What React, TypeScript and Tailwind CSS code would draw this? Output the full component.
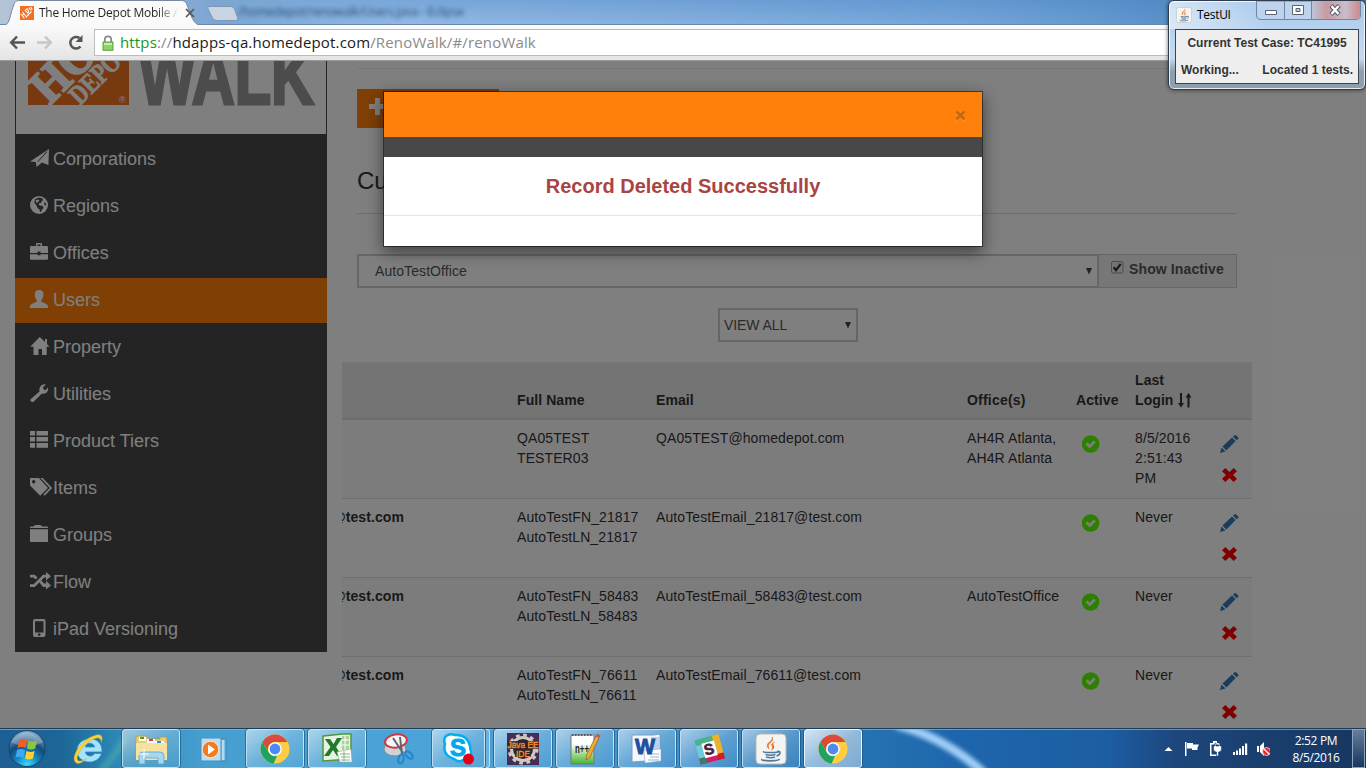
import React from "react";

type IconProps = { className?: string };

const sideIcons: Record<string, React.ReactNode> = {
  send: (
    <>
      <path d="M0 12.4 19 0l-.6 16-6.6-2.6L6.6 18l-.8-5z" />
      <path d="M17 2.500 7.800 12.800" stroke="#484848" strokeWidth="1" fill="none" />
    </>
  ),
  globe: (
    <>
      <circle cx="9" cy="9" r="9" />
      <path
        d="M5 3.2 9 1.6l3.5.9.5 1.7-1.6 1.3-.4 1.6-1.8.2-.7 1.4 1.6.9 2.7.4.8 1.9-1.6 1.5-.6 2-1.2.5-.8-2.4-1.8-1.6L6.200 9 4.300 6.600z"
        fill="#484848"
      />
      <path d="M5.500 4.500 8 3.500l1.500 1-1.800 2-1.500.3zM11 3l1 1" fill="#fff" />
      <path d="M14.500 5.500l1.600 2.600-.4 1.700-1.500-1z" fill="#484848" />
    </>
  ),
  briefcase: (
    <path d="M6 3V1.200Q6 0 7 0h4q1 0 1 1.200V3h4.800Q18 3 18 4.200V10h-7.500V8.500h-3V10H0V4.200Q0 3 1.200 3zm1.400 0h3.200V1.400H7.400zM0 11.300h7.500v1h3v-1H18v4.200q0 1.200-1 1.200H1q-1 0-1-1.200z" />
  ),
  user: (
    <path d="M4.800 4Q4.800 0 9 0t4.500 4q0 4.500-2.300 6.300v1.200l5 2.500q1.800.8 1.800 2.300V18H0v-1.700Q0 14.800 1.800 14l5-2.500v-1.200Q4.800 8.500 4.800 4z" />
  ),
  home: <path d="M9.800 0 15 5V2h2v5l2.400 2.700h-2.700V18h-4.700v-6H8.500v6h-5V9.700H.2z" />,
  wrench: (
    <path d="M.6 15.200 9.500 7.600Q8.700 3.500 11.500 1.300 13.500-.2 16 .4L13 3.300l.5 2.200 2.400.4L18 3.200q1 3-1.300 5.200-2.200 1.900-5 1.300L3.600 17.700q-1.500.8-2.600-.3t-.4-2.200z" />
  ),
  list: (
    <path d="M.5 0H5v4.600H0V.5zM6.500 0H18v4.600H6.500zM0 6h5v4.600H0zM6.500 6H18v4.600H6.500zM0 12h5v4.800H.5L0 16zM6.500 12H18v4.800H6.500z" />
  ),
  tags: (
    <>
      <path
        fillRule="evenodd"
        d="M0 .8Q0 0 .8 0H9l9 10-7.800 7.800L0 7.500zM3.600 2a1.700 1.700 0 1 0 .1 0z"
      />
      <path d="M10.500 0h2.300l9.400 10-7.600 7.800-1.300-1.300L19.800 10z" />
    </>
  ),
  folder: (
    <path d="M0 3V2.200Q0 1.500.8 1.500H3.500Q4.500 0 5.500 0h4.700q1 0 1.800 1.500h5.200q.8 0 .8.8V3zM0 4.300h18v12q0 .7-.8.700H.8Q0 17 0 16.300z" />
  ),
  random: (
    <path d="M0 2.800h4.800l2.700 2.700-1.900 2-2-2H0zm0 9.400h3.600l9.500-9.400H16V0l5 4.200-5 4.200V5.500h-1.800L4.800 15H0zm9.400-1.800 1.900-1.900 2.900 2.900H16V8.800l5 4.600-5 4.200V15h-3z" />
  ),
  phone: (
    <path
      fillRule="evenodd"
      d="M5 0h8.500q2 0 2 2v14q0 2-2 2H5q-2 0-2-2V2q0-2 2-2zm0 2.300v11.200h8.500V2.300zm4.200 12a1.300 1.300 0 1 0 .1 0z"
    />
  ),
};

const navItems = [
  { label: "Corporations", icon: "send" },
  { label: "Regions", icon: "globe" },
  { label: "Offices", icon: "briefcase" },
  { label: "Users", icon: "user", active: true },
  { label: "Property", icon: "home" },
  { label: "Utilities", icon: "wrench" },
  { label: "Product Tiers", icon: "list" },
  { label: "Items", icon: "tags" },
  { label: "Groups", icon: "folder" },
  { label: "Flow", icon: "random" },
  { label: "iPad Versioning", icon: "phone" },
];

const rows = [
  { user: "", name: ["QA05TEST", "TESTER03"], email: "QA05TEST@homedepot.com", offices: ["AH4R Atlanta,", "AH4R Atlanta"], login: ["8/5/2016", "2:51:43", "PM"] },
  { user: "@test.com", name: ["AutoTestFN_21817", "AutoTestLN_21817"], email: "AutoTestEmail_21817@test.com", offices: [], login: ["Never"] },
  { user: "@test.com", name: ["AutoTestFN_58483", "AutoTestLN_58483"], email: "AutoTestEmail_58483@test.com", offices: ["AutoTestOffice"], login: ["Never"] },
  { user: "@test.com", name: ["AutoTestFN_76611", "AutoTestLN_76611"], email: "AutoTestEmail_76611@test.com", offices: [], login: ["Never"] },
];

function DepotMark({ className }: IconProps) {
  return (
    <svg viewBox="0 0 16 16" className={className}>
      <path d="M0 0h16v16H0z" fill="#f27021" />
      <path d="m1 9 4 5M3 7l4 5M2 11l3-2M6 5l3 3 1-2-2-3zM10 2l3 3M12 1l2 3M7 13l2-3M9 11l2-3M11 9l2-3" stroke="#fff" strokeWidth="1.200" fill="none" />
    </svg>
  );
}

function BrowserChrome() {
  return (
    <header className="flex flex-none flex-col">
      <div className="relative flex h-[25px] items-end overflow-hidden bg-linear-to-b from-[#6d9fd3] to-[#a1c4e9]">
        <svg className="absolute inset-0" width="1366" height="25">
          <defs>
            <linearGradient id="glass" x1="0" x2="1">
              <stop offset="0" stopColor="#b5c3d5" />
              <stop offset=".16" stopColor="#7ba5d1" />
              <stop offset=".3" stopColor="#84aede" stopOpacity=".5" />
              <stop offset=".7" stopColor="#5b93cf" stopOpacity=".6" />
              <stop offset="1" stopColor="#3f78b6" />
            </linearGradient>
            <filter id="soft"><feGaussianBlur stdDeviation="2.200" /></filter>
          </defs>
          <rect width="1366" height="25" fill="url(#glass)" />
          <text x="238" y="16" fontSize="12" textLength="226" fontFamily="Open Sans, sans-serif" fill="#1d3f68" opacity=".85" filter="url(#soft)">
            /homedepot/renowalk/Users.java - Eclipse
          </text>
          <path d="M0 24.500h1366" stroke="#6889ad" />
          <path d="M3 25.500C10 25 9 18 13 7 15 1 16 .5 20 .5h160c5 0 6 1 8 7 4 12 7 18 14 18z" fill="#fafafa" stroke="#7789a0" />
          <path d="M209 6.500h22q2.500 0 3.500 2.500l3 8.500q1 3-2 3h-19q-3 0-4-2.500l-4.500-9q-1-2.500 1-2.500z" fill="#c8d4e3" stroke="#8195b0" />
        </svg>
        <div className="relative flex h-full items-center pl-[20px]">
          <DepotMark className="h-[14px] w-[14px]" />
          <span className="ml-[5px] w-[139px] overflow-hidden whitespace-nowrap bg-linear-to-r from-[#222] from-85% to-transparent bg-clip-text font-['Open_Sans',sans-serif] text-[12px] tracking-[-0.25px] text-transparent">
            The Home Depot Mobile App
          </span>
          <svg className="ml-[6px]" width="12" height="12"><path d="m2 2 8 8M10 2l-8 8" stroke="#555" strokeWidth="1.700" /></svg>
        </div>
      </div>
      <div className="flex h-[36px] items-center border-b border-[#9a9a9a] bg-linear-to-b from-[#fafafa] to-[#e4e4e4] pl-[8px]">
        <svg width="82" height="24" fill="none" strokeWidth="2.500">
          <path d="M17 11.500H4M9 5.500 3.200 11.500 9 17.500" stroke="#555" />
          <path d="M29 11.500h13M37 5.500l5.800 6-5.800 6" stroke="#c6c6c6" />
          <path d="M72.500 15.500A5.800 5.800 0 1 1 71.500 7" stroke="#555" />
          <path d="M74.500 4v7h-7z" fill="#555" />
        </svg>
        <div className="ml-[4px] flex h-[27px] flex-1 items-center border border-r-0 border-[#bcbcbc] bg-white pl-[7px]">
          <svg width="12" height="16" viewBox="0 0 12 16">
            <path d="M2.800 8V4.500a3.200 3.200 0 0 1 6.400 0V8" fill="none" stroke="#8b8b8b" strokeWidth="1.800" />
            <path d="M1 7h10v8.300H1z" fill="#8ed36a" stroke="#55a337" />
            <path d="M2 8h8v2H2z" fill="#c8ecb2" />
          </svg>
          <span className="ml-[6px] font-['Open_Sans',sans-serif] text-[15px] tracking-[0.155px] whitespace-nowrap text-[#8a8a8a]">
            <span className="text-[#159915]">https</span>://<span className="text-[#1a1a1a]">hdapps-qa.homedepot.com</span>/RenoWalk/#/renoWalk
          </span>
        </div>
      </div>
    </header>
  );
}

function Logo() {
  return (
    <svg width="310" height="73" viewBox="16 61 310 73" className="block">
      <defs><clipPath id="square"><path d="M28 4h101v101H28z" /></clipPath></defs>
      <g clipPath="url(#square)">
        <path d="M28 4h101v101H28z" fill="#ef721f" />
        <g fill="#fff" stroke="#fff" strokeWidth="1.800" fontFamily="Liberation Serif, serif" fontWeight="700">
          <text transform="translate(49.500 106) rotate(-45) scale(.93 1)" fontSize="49">HOME</text>
          <text transform="translate(80 106) rotate(-45) scale(.78 1)" strokeWidth=".8" fontSize="28">DEPOT</text>
        </g>
        <text x="119" y="103" fontSize="9" fill="#fff" fontFamily="Liberation Sans, sans-serif">®</text>
      </g>
      <text x="139" y="103.500" fontSize="80" fontWeight="700" textLength="175" lengthAdjust="spacingAndGlyphs" fill="#98999b" stroke="#98999b" strokeWidth="3" fontFamily="Liberation Sans, sans-serif">WALK</text>
    </svg>
  );
}

function Sidebar() {
  return (
    <aside className="ml-[15px] h-[591px] w-[312px] flex-none bg-[#484848]">
      <div className="mx-px bg-white"><Logo /></div>
      <nav className="flex flex-col gap-[2px] pt-[3px]">
        {navItems.map((item) => (
          <a key={item.label} className={"flex h-[45px] items-center pl-[15px] text-[18px] text-white " + (item.active ? "bg-[#ff7f0a]" : "")}>
            <svg width="18" height="18" viewBox="0 0 18 18" fill="#fff" className="mr-[5px] -mt-[4px] flex-none overflow-visible">
              {sideIcons[item.icon]}
            </svg>
            <span className="-mt-[1px]">{item.label}</span>
          </a>
        ))}
      </nav>
    </aside>
  );
}

function Caret() {
  return <svg width="6" height="7"><path d="M0 0h6L3 6.500z" fill="#444" /></svg>;
}

function RowIcons() {
  return (
    <div className="flex w-[40px] flex-col items-start pt-[15px] pl-[8px]">
      <svg width="19" height="18" viewBox="0 0 19 18" fill="#337ab7">
        <path d="M0 18l1.500-5.500 4 4zM2.500 11.500 12 2.500l3.600 3.600-9.200 9.300zM13 1.700 14.500.3q1-.6 1.800.2l1.900 1.900q.6.900 0 1.500l-1.500 1.400z" />
      </svg>
      <svg className="mt-[15px] ml-[2px]" width="15" height="14" viewBox="0 0 15 14">
        <path d="M3.300 0 7.500 4 11.700 0 15 3.200 11 7l4 3.800-3.300 3.200-4.200-4-4.200 4L0 10.800 4 7 0 3.200z" fill="#ff0000" />
      </svg>
    </div>
  );
}

function UserTable() {
  return (
    <div className="mt-[20px] w-[910px] text-[14px] leading-[20px] text-[#333]">
      <div className="flex h-[58px] items-end border-b-2 border-[#dadada] bg-[#e8e8e8] pb-[8px] font-bold tracking-[0.08px]">
        <div className="w-[167px]" />
        <div className="w-[139px] pl-[8px]">Full Name</div>
        <div className="w-[311px] pl-[8px]">Email</div>
        <div className="w-[109px] pl-[8px] tracking-[0.2px]">Office(s)</div>
        <div className="w-[59px] pl-[8px]">Active</div>
        <div className="w-[125px] pl-[8px]">
          Last<br />
          <span className="flex items-center">
            Login
            <svg className="ml-[4px]" width="14" height="15" viewBox="0 0 14 15" fill="#333">
              <path d="M2 0h2v10h2l-3 4.500L0 10h2zM9.500 14.500V4.500h-2L10.500 0l3 4.500h-2v10z" />
            </svg>
          </span>
        </div>
      </div>
      {rows.map((row, i) => (
        <div
          key={i}
          className={"flex tracking-[0.1px] " + (i === 0 ? "h-[78px] " : "h-[79px] border-t border-[#ddd] ") + (i % 2 === 0 ? "bg-[#f9f9f9]" : "bg-white")}
        >
          <div className="flex w-[62px] flex-none justify-end overflow-hidden pt-[8px] font-bold">{row.user}</div>
          <div className="ml-[105px] w-[139px] pt-[8px] pl-[8px]">{row.name.map((t) => <div key={t}>{t}</div>)}</div>
          <div className="w-[311px] pt-[8px] pl-[8px]">{row.email}</div>
          <div className="w-[109px] pt-[8px] pl-[8px]">{row.offices.map((t) => <div key={t}>{t}</div>)}</div>
          <div className="w-[59px] pt-[15px] pl-[14px]">
            <svg width="18" height="18" viewBox="0 0 18 18">
              <circle cx="8.600" cy="9" r="8.800" fill="#5bff00" />
              <path d="m3.500 9.300 2.100-2.100 2.200 2.200 3.900-4 2.100 2.100L7.800 13.500z" fill="#f9f9f9" />
            </svg>
          </div>
          <div className="w-[85px] pt-[8px] pl-[8px]">{row.login.map((t) => <div key={t}>{t}</div>)}</div>
          <RowIcons />
        </div>
      ))}
    </div>
  );
}

function MainPanel() {
  return (
    <main className="ml-[15px] w-[910px] flex-none">
      <div className="px-[15px] pt-[7px]">
        <hr className="border-[#eee]" />
        <button className="mt-[20px] flex h-[39px] w-[142px] items-center bg-[#ff7f0a] pl-[12px] text-white">
          <svg width="17" height="17" className="-mt-[4px]"><path d="M6 0h5v6h6v5h-6v6H6v-6H0V6h6z" fill="#fff" /></svg>
        </button>
        <h3 className="mt-[40px] text-[24px] leading-[26px] text-[#333]">Current Users</h3>
        <hr className="mt-[19px] border-[#ddd]" />
        <div className="mt-[40px] flex h-[34px] text-[14px] text-[#555]">
          <div className="flex flex-1 items-center justify-between border-2 border-[#ccc] bg-white pr-[5px] pl-[16px] tracking-[0.08px]">
            AutoTestOffice
            <Caret />
          </div>
          <div className="flex w-[138px] border border-l-0 border-[#ccc] bg-[#eee] pl-[12px]">
            <svg className="mt-[6px]" width="13" height="13">
              <rect x=".5" y=".5" width="11.500" height="11.500" rx="1.500" fill="#e9e9e9" stroke="#999" />
              <path d="m2.700 6.300 2.300 2.800 4.700-6.300" stroke="#333" strokeWidth="2.200" fill="none" />
            </svg>
            <span className="ml-[5px] pt-[4px] font-bold leading-[20px] tracking-[0.12px] whitespace-nowrap">Show Inactive</span>
          </div>
        </div>
        <div className="mx-auto mt-[20px] ml-[361px] flex h-[34px] w-[140px] items-center justify-between border-2 border-[#ccc] bg-white pr-[5px] pl-[4px] text-[14px] text-[#555]">
          <span className="tracking-[-0.08px]">VIEW ALL</span>
          <Caret />
        </div>
      </div>
      <UserTable />
    </main>
  );
}

function Dialog() {
  return (
    <div className="absolute inset-0 flex items-start justify-center bg-black/50 pt-[30px]">
      <div className="w-[600px] border border-black/50 bg-white bg-clip-padding shadow-[0_5px_15px_rgba(0,0,0,0.5)]">
        <div className="flex h-[45px] items-center justify-end bg-[#ff810c] pr-[16px]">
          <svg width="11" height="11" viewBox="0 0 11 11" className="mt-[2px]">
            <path d="m1.500 2.500 8 8m0-8-8 8" stroke="#ffb066" strokeWidth="1.500" />
            <path d="m1.500 1.500 8 8m0-8-8 8" stroke="#c4680f" strokeWidth="2.600" />
          </svg>
        </div>
        <div className="h-[20px] bg-[#484849]" />
        <div className="flex h-[58px] items-center justify-center text-[20px] font-bold text-[#a94442]">
          Record Deleted Successfully
        </div>
        <div className="h-[31px] border-t border-[#e5e5e5]" />
      </div>
    </div>
  );
}

function JavaCup({ className }: IconProps) {
  return (
    <svg viewBox="0 0 32 32" className={className}>
      <rect x="1" y="1" width="30" height="30" rx="4" fill="#f4f4f2" stroke="#b9b9b5" />
      <path d="M17 4q2 3-1.500 5.500T14 16q-4-3.500.5-7T17 4zM19.500 9q-4 2-2.500 4t-.5 4q4-2 2-4.500T19.500 9z" fill="#e76f1f" stroke="#e76f1f" strokeWidth=".6" />
      <path d="M9 18.500q-2 1 7 1t6-1M10.500 21.500q5 1.500 10 0M11 24q5 1.500 9 0M7 26q-1 1.800 8 1.800t9.500-1.800M22 18.500q4-.5 2.500 2.500-1 1.500-3 2" fill="none" stroke="#517a98" strokeWidth="1.700" />
    </svg>
  );
}

function TestWindow() {
  return (
    <section className="absolute top-0 right-0 flex h-[90px] w-[198px] flex-col overflow-hidden rounded-[6px] border border-[#2f3c4b] bg-linear-to-b from-[#a9c9ec] from-0% via-[#c5daf1] via-65% to-[#8f9eaf] to-80% shadow-[inset_0_0_0_1px_rgba(255,255,255,0.8),0_0_4px_rgba(0,0,0,0.6)]">
      <div className="flex h-[28px] items-start justify-between bg-linear-to-r from-white/50 via-transparent to-transparent pl-[7px]">
        <div className="flex h-full items-center">
          <JavaCup className="h-[16px] w-[16px]" />
          <span className="ml-[5px] font-['Open_Sans',sans-serif] text-[12px] tracking-[-0.3px] text-black">TestUI</span>
        </div>
        <svg width="105" height="20" className="mr-[4px] flex-none">
          <defs>
            <linearGradient id="closeGlow" x1="0" x2="1">
              <stop offset="0" stopColor="#bcc5d8" /><stop offset=".3" stopColor="#c99a9f" /><stop offset=".7" stopColor="#c9bccb" /><stop offset="1" stopColor="#cf8a8d" />
            </linearGradient>
          </defs>
          <path d="M.5 0v14q0 4.500 4.500 4.500h95q4.500 0 4.500-4.500V0z" fill="#bdd3ee" stroke="#71869f" />
          <path d="M56 0v18h44q4 0 4-4V0z" fill="url(#closeGlow)" />
          <path d="M28.500 0v18M55.500 0v18" stroke="#71869f" />
          <path d="M9.500 9.500h11v4h-11z" fill="#fff" stroke="#5b6473" />
          <path d="M36.500 4.500h11v9h-11z" fill="#fff" stroke="#5b6473" />
          <path d="M40 7.500h4v3h-4z" fill="#b9cbe2" stroke="#5b6473" />
          <path d="m75 4.500 8 9m0-9-8 9" stroke="#566070" strokeWidth="4.500" />
          <path d="m75.500 5 7 8m0-8-7 8" stroke="#fff" strokeWidth="2.400" />
        </svg>
      </div>
      <div className="mx-[6px] flex h-[55px] flex-col justify-between border border-[#3a4452] bg-[#eee] pt-[5px] pb-[4px] text-[12px] leading-[17px] font-bold text-[#333]">
        <div className="text-center whitespace-nowrap">Current Test Case: TC41995</div>
        <div className="flex justify-between pr-[5px] pl-[5px] whitespace-nowrap"><span>Working...</span><span>Located 1 tests.</span></div>
      </div>
    </section>
  );
}

function ChromeIcon() {
  return (
    <>
      <circle cx="16" cy="16" r="14.500" fill="#ffcd42" />
      <path d="M3.500 8.700A14.500 14.500 0 0 1 28.600 9H16a7 7 0 0 0-6.300 10z" fill="#d94c3d" />
      <path d="M3.500 8.700 9.800 19.500A7 7 0 0 0 18 22.700L14.700 30.400A14.500 14.500 0 0 1 3.500 8.700z" fill="#1da362" />
      <circle cx="16" cy="16" r="6.800" fill="#fff" />
      <circle cx="16" cy="16" r="5.400" fill="#4c8bf5" />
    </>
  );
}

const tasks: { name: string; kind: "plain" | "open" | "active"; art: React.ReactNode }[] = [
  {
    name: "ie", kind: "plain",
    art: (
      <>
        <path d="M29 19H12.500c.3 4.500 7 5.500 9 1.500h7C25 33 4 31.500 4 17.500 4 2.500 30 .5 29 19zM12.500 14h9c-.7-5-8.500-5-9 0z" fill="#a5e3fb" stroke="#2a8bc9" strokeWidth=".8" />
        <path d="M4.500 30.500C-4 28 5 9.500 19 3.500c7-3 12-2.500 9.500 6-.5-5.500-4-5.500-9-3C8.500 12 .5 26.500 6 28q3.500.5 7.500-2.500-5.500 5.500-9 5z" fill="#fbd234" stroke="#d5a017" strokeWidth=".4" />
      </>
    ),
  },
  {
    name: "explorer", kind: "open",
    art: (
      <>
        <path d="M1 5q0-2 2-2h8l2 3h12V4h5q2 0 2 2v20H1z" fill="#e8cd7c" stroke="#b99645" strokeWidth=".7" />
        <path d="M4 4h7v4H4zM12 6h8v4h-8zM20 8h9v4h-9z" fill="#fff" />
        <path d="M5 4h4v2H5z" fill="#37a637" /><path d="M14 6h4v2h-4z" fill="#d64031" /><path d="M22 8h4v2h-4z" fill="#2e8cd0" />
        <path d="M1 10h31v17H1z" fill="#f6e2a0" />
        <path d="M4 31v-8q0-4 4-4h17q4 0 4 4v8h-6v-6H10v6z" fill="#a4d7f1" stroke="#5da2cb" strokeWidth=".8" />
        <path d="M9 16v10M4 21h10" stroke="#fff" />
      </>
    ),
  },
  {
    name: "player", kind: "plain",
    art: (
      <>
        <path d="M20 6h9v22h-9z" fill="#7fbfe4" stroke="#3a83b5" /><path d="M4 5h20v23H4z" fill="#b8dcf0" stroke="#4c91bd" />
        <path d="M26 7v20" stroke="#e8f6fd" />
        <circle cx="13.500" cy="16.500" r="8.300" fill="#f47c1c" stroke="#fff" strokeWidth=".7" /><path d="M11 11.500v10l7-5z" fill="#fff" />
      </>
    ),
  },
  { name: "chrome", kind: "open", art: <ChromeIcon /> },
  {
    name: "excel", kind: "open",
    art: (
      <>
        <path d="M2 3 22 1h8v25l-28 2z" fill="#e8f3df" stroke="#4f9838" strokeWidth="1.500" />
        <path d="M21 3h7v14h-7z" fill="#a8d39a" /><path d="M24 3v14M21 7h7M21 12h7" stroke="#fff" />
        <path d="M4 6h5l3.500 5L16 5h5l-6 9 6 9h-5l-4-6-4 6H3l6.500-9z" fill="#1f7a2f" />
        <path d="m16 19 14-3 1 13H19z" fill="#fff" stroke="#8fb586" strokeWidth=".6" /><path d="M19 21h10M20 24h9M20 27h9M23 18v10" stroke="#70a362" strokeWidth=".8" />
      </>
    ),
  },
  {
    name: "snip", kind: "plain",
    art: (
      <>
        <ellipse cx="12" cy="16" rx="11" ry="7" fill="#cfd3d6" stroke="#818a90" />
        <ellipse cx="13" cy="8" rx="11" ry="6.500" transform="rotate(-8 13 8)" fill="#f6f6f6" stroke="#d53540" strokeWidth="2" />
        <path d="m10 5 10 15M17 4l2 17" stroke="#5d6670" strokeWidth="2" />
        <ellipse cx="18" cy="26" rx="2.500" ry="4.500" transform="rotate(15 18 26)" fill="none" stroke="#2686c8" strokeWidth="2" />
        <ellipse cx="26" cy="22" rx="2.500" ry="4.500" transform="rotate(-45 26 22)" fill="none" stroke="#2686c8" strokeWidth="2" />
      </>
    ),
  },
  {
    name: "skype", kind: "open",
    art: (
      <>
        <path d="M3 3q4-3 9-1 12-1 15 11 0 3 1 5 1 9-8 9-4 3-9-1Q-1 22 2 11 0 6 3 3z" fill="#fff" stroke="#00aff0" strokeWidth="2.500" />
        <text x="7" y="22.500" fontSize="24" fontWeight="700" fill="#00a8ec" stroke="#00a8ec" fontFamily="Liberation Sans, sans-serif">S</text>
        <circle cx="25.500" cy="26" r="5.500" fill="#e1001a" />
      </>
    ),
  },
  {
    name: "javaee", kind: "open",
    art: (
      <>
        <path d="M0 0h32v32H0z" fill="#492c56" />
        <circle cx="16" cy="16" r="11.500" fill="#2e2430" stroke="#cfc9c4" strokeWidth="3" /><circle cx="16" cy="16" r="14" fill="none" stroke="#cfc9c4" strokeWidth="3" strokeDasharray="3.700 3.600" />
        <path d="M0 8h32v8H0zM8 16h16v8H8z" fill="#2e2430" opacity=".8" />
        <g fill="#ff9322" stroke="#ff9322" strokeWidth=".3" fontFamily="Liberation Sans, sans-serif" fontSize="8.500"><text x=".5" y="15.300" textLength="31" lengthAdjust="spacingAndGlyphs">Java EE</text><text x="9" y="23.800" textLength="14" lengthAdjust="spacingAndGlyphs">IDE</text></g>
      </>
    ),
  },
  {
    name: "npp", kind: "open",
    art: (
      <>
        <defs><linearGradient id="npg" x2="0" y2="1"><stop offset=".3" stopColor="#fff" /><stop offset="1" stopColor="#45b52c" /></linearGradient></defs>
        <path d="M2 2h23v29H2z" fill="url(#npg)" stroke="#777" /><path d="M3 2h21" stroke="#555" strokeWidth="2" strokeDasharray="1.500 1.500" />
        <text x="6" y="20" fontSize="12" fontWeight="700" fill="#222" fontFamily="Liberation Sans, sans-serif" textLength="14" lengthAdjust="spacingAndGlyphs">n++</text>
        <path d="M28 1l3 1.500L21 24l-4 3 .5-5z" fill="#efad35" stroke="#8c5c20" strokeWidth=".7" /><path d="M28 1l3 1.500-1.200 2.500-3-1.500z" fill="#d9534f" />
      </>
    ),
  },
  {
    name: "word", kind: "open",
    art: (
      <>
        <path d="M1 2h22l6-1v26L1 29z" fill="#f3f8fd" stroke="#7b9cc8" /><path d="M20 4h8v13h-8z" fill="#b9d2ee" />
        <path d="m13 17 17-1v12l-16 2z" fill="#fff" stroke="#8da6c6" strokeWidth=".6" /><path d="M19 21h9M19 24h9M17 27h11" stroke="#7d9fce" strokeWidth=".8" />
        <text x="4" y="21" fontSize="22" fontWeight="700" fill="#1e50a0" stroke="#1e50a0" textLength="20" lengthAdjust="spacingAndGlyphs" fontFamily="Liberation Sans, sans-serif">W</text>
      </>
    ),
  },
  {
    name: "slack", kind: "open",
    art: (
      <g transform="rotate(-15 16 16)">
        <path d="M4 4h7v20H4z" fill="#70cadb" /><path d="M4 4h24v6H4z" fill="#49b487" /><path d="M22 4h7v21h-7z" fill="#ecb22e" /><path d="M4 23h25v6H4z" fill="#e01765" /><path d="M22 23h7v6h-7z" fill="#cb2027" /><path d="M4 23h7v6H4z" fill="#36806a" />
        <path d="M10 9h13v15H10z" fill="#fff" /><text x="11" y="21.500" fontSize="15" fontWeight="700" fill="#482241" stroke="#482241" strokeWidth=".6" fontFamily="Liberation Sans, sans-serif">S</text>
      </g>
    ),
  },
  { name: "java", kind: "open", art: null },
  { name: "chrome2", kind: "active", art: <ChromeIcon /> },
];

const taskStyle = {
  plain: "border-transparent",
  open: "border-[#d5ecfa]/80 bg-linear-to-br from-white/55 via-white/20 to-white/5 outline outline-[#184c74]/60",
  active: "border-white/80 bg-linear-to-br from-white/80 via-white/50 to-white/40 outline outline-[#184c74]/60",
};

function Taskbar() {
  return (
    <footer className="relative flex h-[40px] flex-none items-stretch overflow-hidden border-t border-[#1c3b57]">
      <svg className="absolute inset-0" width="1366" height="40">
        <defs>
          <linearGradient id="bar" x1="0" x2="1">
            <stop offset="0" stopColor="#1f5f93" /><stop offset=".045" stopColor="#1c6697" /><stop offset=".09" stopColor="#2f8bb9" /><stop offset=".15" stopColor="#479fd0" /><stop offset=".31" stopColor="#4ba3d8" /><stop offset=".5" stopColor="#3f90cb" /><stop offset=".62" stopColor="#2775b5" /><stop offset=".7" stopColor="#1e66ac" /><stop offset=".81" stopColor="#1c5ea4" /><stop offset=".86" stopColor="#1d477c" /><stop offset="1" stopColor="#16365f" />
          </linearGradient>
          <radialGradient id="orb" cx=".5" cy=".95" r=".9"><stop offset="0" stopColor="#37dcff" /><stop offset=".35" stopColor="#1686bd" /><stop offset=".65" stopColor="#134a7c" /><stop offset="1" stopColor="#7fa9c8" /></radialGradient>
          <filter id="beam"><feGaussianBlur stdDeviation="2" /></filter>
        </defs>
        <rect width="1366" height="40" fill="url(#bar)" />
        <path d="M100 42q15-14 24-32" stroke="#62c7a8" strokeWidth="7" opacity=".35" fill="none" filter="url(#beam)" />
        <path d="M896-4q48 12 88 48" stroke="#9fcdf6" strokeWidth="9" fill="none" filter="url(#beam)" />
        <path d="M0 .5h1366" stroke="#8cbcdd" opacity=".65" />
        <circle cx="27" cy="19.500" r="18" fill="url(#orb)" stroke="#16446d" />
        <path d="M11 13q15-19 32 0-16 9-32 0z" fill="#fff" opacity=".25" />
        <path d="M19 11q4-2.500 8 0l-1.500 8q-4-2-8 0z" fill="#f15c2b" /><path d="M28.500 11.500q4 2.200 8.500 0l-1.800 8q-4 2-8.200 0z" fill="#8cc63f" /><path d="M17 21q4-2 8 .2l-1.500 7.600q-4-2.300-8 0z" fill="#3fa9f5" /><path d="M26.500 22q4 2 8 0L33 29.500q-4 2-8 0z" fill="#fdd137" />
      </svg>
      <div className="relative flex gap-[4px] pl-[60px]">
        {tasks.map((t) => (
          <div key={t.name} className="flex w-[58px]">
            <div className={"flex flex-1 items-center justify-center rounded-[3px] border " + taskStyle[t.kind]}>
              {t.name === "java" ? <JavaCup className="h-[32px] w-[32px]" /> : <svg width="32" height="32" viewBox="0 0 32 32" className="overflow-visible">{t.art}</svg>}
            </div>
            {t.name === "skype" && <div className="ml-px w-[4px] rounded-r-[3px] border border-l-0 border-[#d5ecfa]/80 bg-white/20" />}
          </div>
        ))}
      </div>
      <div className="relative ml-auto flex items-center text-white">
        <svg width="106" height="22" viewBox="0 0 106 22" fill="#fff">
          <path d="m.5 13 4-4 4 4z" />
          <path d="M21 4h1.500v14H21zM23 5h6v1.500h6l-1.500 3v2.500H28v-1.500h-5z" />
          <path d="M46 5h3V3h4v2h3v2h-2V6.500h-6.500v10H54V18h-8z" /><path d="M51 5v3h-1.500v3q0 3 3 3v4h2v-4q3 0 3-3V8H56V5h-1v3h-3V5z" stroke="#194170" strokeWidth=".6" />
          <path d="M69 14h2v3h-2zM72 12.500h2V17h-2zM75 10.500h2V17h-2zM78 8h2v9h-2zM81 5.500h2.200V17H81z" />
          <path d="M93 8h2v6h-2zM96 8l4-4v14l-4-4z" />
          <circle cx="102.500" cy="13.500" r="4" fill="#e32626" stroke="#fff" strokeWidth=".7" /><path d="m100 11 5 5" stroke="#fff" strokeWidth="1.300" />
        </svg>
        <div className="ml-[13px] w-[66px] text-center font-['Open_Sans',sans-serif] text-[12px] leading-[17px] tracking-[-0.35px]">
          <div>2:52 PM</div>
          <div>8/5/2016</div>
        </div>
        <div className="ml-[3px] h-full w-[13px] border border-[#8ca3bf] bg-linear-to-b from-white/35 to-transparent" />
        <div className="w-px" />
      </div>
    </footer>
  );
}

export default function App() {
  return (
    <div className="relative flex h-[768px] w-[1366px] flex-col overflow-hidden bg-white font-['Liberation_Sans',Arial,sans-serif]">
      <BrowserChrome />
      <div className="relative flex min-h-0 flex-1 items-start overflow-hidden bg-white">
        <Sidebar />
        <MainPanel />
        <Dialog />
      </div>
      <Taskbar />
      <TestWindow />
    </div>
  );
}
